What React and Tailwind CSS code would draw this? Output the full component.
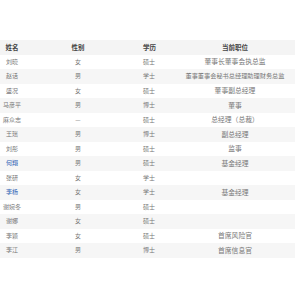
import React from 'react'

const ROWS = [
  { name: '刘晓', sex: '女', edu: '硕士', title: '董事长董事会执总监' },
  { name: '赵话', sex: '男', edu: '学士', title: '董事董事会秘书总经理助理财务总监', small: true },
  { name: '盛况', sex: '女', edu: '硕士', title: '董事副总经理' },
  { name: '马彦平', sex: '男', edu: '博士', title: '董事' },
  { name: '麻众志', sex: '—', edu: '硕士', title: '总经理（总裁）' },
  { name: '王瑶', sex: '男', edu: '博士', title: '副总经理' },
  { name: '刘彤', sex: '男', edu: '硕士', title: '监事' },
  { name: '何翔', sex: '男', edu: '硕士', title: '基金经理', link: true },
  { name: '张研', sex: '女', edu: '学士', title: '' },
  { name: '李杨', sex: '女', edu: '学士', title: '基金经理', link: true },
  { name: '谢婉冬', sex: '男', edu: '硕士', title: '' },
  { name: '谢娜', sex: '女', edu: '硕士', title: '' },
  { name: '李颖', sex: '女', edu: '硕士', title: '首席风险官' },
  { name: '李江', sex: '男', edu: '博士', title: '首席信息官' },
]

const cols = 'grid grid-cols-[24px_108px_43px_120px] items-center h-[14.5px]'

export default function App() {
  return (
    <div className="w-[295px] h-[295px] bg-white pt-[40px] font-['Noto_Sans_CJK_SC',sans-serif] text-[6px] text-[#777] leading-none">
      <div className={`${cols} bg-[#f4f4f4] text-[#444] font-bold text-[6.5px]`}>
        <div className="text-center">姓名</div>
        <div className="text-center">性别</div>
        <div className="pl-[11px]">学历</div>
        <div className="text-center">当前职位</div>
      </div>
      {ROWS.map((r, i) => (
        <div key={i} className={`${cols} ${i % 2 === 1 ? 'bg-[#f6f6f6]' : 'bg-white'}`}>
          <div className={`text-center whitespace-nowrap ${r.link ? 'text-[#2f64b5]' : ''}`}>{r.name}</div>
          <div className="text-center">{r.sex}</div>
          <div className="pl-[11px]">{r.edu}</div>
          <div className={`text-center whitespace-nowrap ${r.small ? 'text-[6.2px]' : 'text-[6.8px]'}`}>{r.title}</div>
        </div>
      ))}
    </div>
  )
}
